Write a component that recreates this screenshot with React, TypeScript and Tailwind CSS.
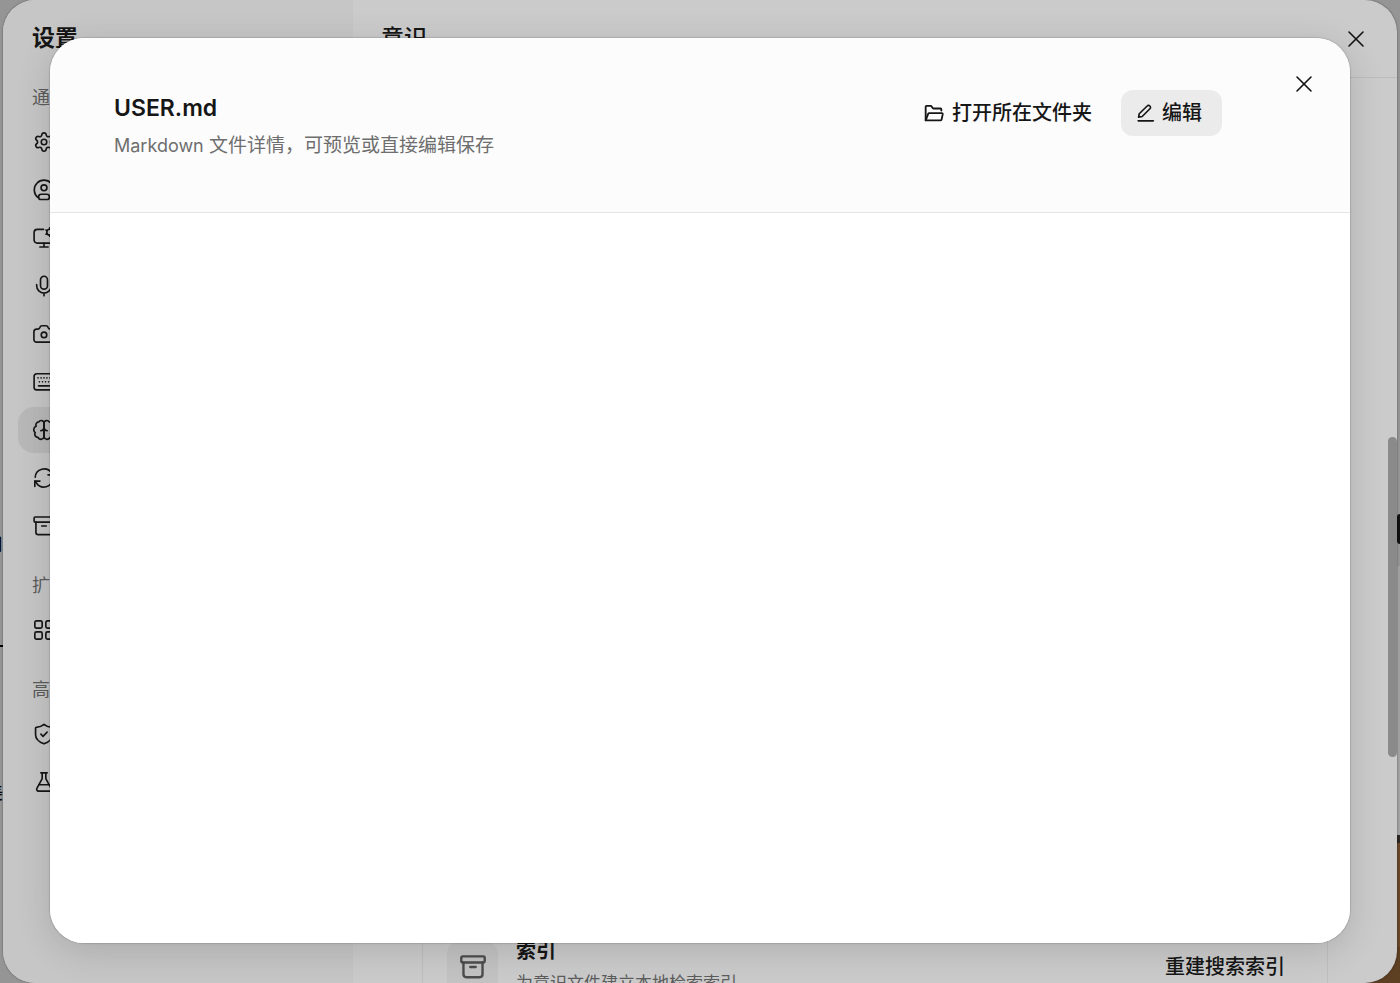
import React from "react";
import { FlaskConical, Settings, X } from "lucide-react";

interface IconProps {
  className?: string;
  children?: React.ReactNode;
}

const Icon = ({
  className = "size-[22px] stroke-[1.8]",
  children,
}: IconProps) => (
  <svg
    viewBox="0 0 24 24"
    fill="none"
    stroke="currentColor"
    strokeLinecap="round"
    strokeLinejoin="round"
    className={`shrink-0 ${className}`}
    aria-hidden="true"
  >
    {children}
  </svg>
);

const UserIcon = () => (
  <Icon>
    <path d="M5.2 20A10.6 10.6 0 1 1 18.8 20" />
    <circle cx="12" cy="9.6" r="3.2" />
    <rect x="6.2" y="16.6" width="11.6" height="5.8" rx="2.6" />
  </Icon>
);

const MonitorIcon = () => (
  <Icon>
    <path d="M11.5 2.6H4.6A3.4 3.4 0 0 0 1.2 6v8.2a3.4 3.4 0 0 0 3.4 3.4h14.8a3.4 3.4 0 0 0 3.4-3.4V11" />
    <path d="M12 17.6v4.2M7.5 21.8h9" />
    <circle cx="18.2" cy="5.6" r="3.2" />
    <path d="M18.2 1v1.4M18.2 8.8v1.4M14.2 3.3l1.2.7M21 7.2l1.2.7M14.2 7.9l1.2-.7M21 4l1.2-.7" />
  </Icon>
);

const MicIcon = () => (
  <Icon>
    <rect x="8.2" y="1.4" width="7.6" height="14" rx="3.8" />
    <path d="M4 10.5v1.2a8 8 0 0 0 16 0v-1.2M12 19.7v3" />
  </Icon>
);

const CameraIcon = () => (
  <Icon>
    <path d="M4 6.6h1.2c1.2 0 1.7-.5 2.2-1.6.5-1.3 1-2 2.4-2h4.4c1.4 0 1.9.7 2.4 2 .5 1.1 1 1.6 2.2 1.6H20a3 3 0 0 1 3 3V18a2.8 2.8 0 0 1-2.8 2.8H3.8A2.8 2.8 0 0 1 1 18V9.6a3 3 0 0 1 3-3Z" />
    <circle cx="12" cy="13" r="3" />
  </Icon>
);

const KeyboardIcon = () => (
  <Icon>
    <rect x="1.2" y="3" width="21.6" height="17.6" rx="3" />
    <path d="M6 16.2h12" />
    <path d="M5.5 7.5h.01M8.8 7.5h.01M12 7.5h.01M15.2 7.5h.01M18.5 7.5h.01M7 11.8h.01M10.4 11.8h.01M13.7 11.8h.01M17 11.8h.01" />
  </Icon>
);

const BrainIcon = () => (
  <Icon>
    <path d="M12 4.4a3 3 0 0 0-5.6-1.2 3.4 3.4 0 0 0-3 4.7 4 4 0 0 0-1 6.9 3.6 3.6 0 0 0 3 5.3A3.5 3.5 0 0 0 12 19.6Z" />
    <path d="M12 4.4a3 3 0 0 1 5.6-1.2 3.4 3.4 0 0 1 3 4.7 4 4 0 0 1 1 6.9 3.6 3.6 0 0 1-3 5.3A3.5 3.5 0 0 1 12 19.6Z" />
    <path d="M8.5 12.8c1.9-.2 3.100-1.200 3.500-3 .4 1.800 1.600 2.800 3.500 3" />
  </Icon>
);

const SyncIcon = () => (
  <Icon>
    <path d="M2.4 11.2a9.7 9.7 0 0 1 17.8-4.7L22 8.6" />
    <path d="M22 2.8v5.8h-5.6" />
    <path d="M21.6 12.8a9.7 9.7 0 0 1-17.8 4.7L2 15.4" />
    <path d="M2 21.2v-5.8h5.6" />
  </Icon>
);

const ArchiveIcon = ({ className }: IconProps) => (
  <Icon className={className}>
    <rect x="1.2" y="2.2" width="21.6" height="5.6" rx="1.2" />
    <path d="M3.2 7.8v11a2.6 2.6 0 0 0 2.6 2.6h12.4a2.6 2.6 0 0 0 2.6-2.6v-11M9.5 12h5" />
  </Icon>
);

const GridIcon = () => (
  <Icon>
    <rect x="2" y="2" width="8" height="8" rx="1.8" />
    <rect x="14" y="2" width="8" height="8" rx="1.8" />
    <rect x="2" y="14" width="8" height="8" rx="1.8" />
    <rect x="14" y="14" width="8" height="8" rx="1.8" />
  </Icon>
);

const ShieldIcon = () => (
  <Icon>
    <path d="M12 1.5c-2.2 1.9-5 3-8.500 3.200-.4 0-.7.4-.7.8v7.300c0 4.500 3.800 7.900 9.200 9.900 5.400-2 9.200-5.400 9.200-9.900V5.500c0-.4-.3-.8-.7-.8C17 4.500 14.200 3.400 12 1.500Z" />
    <path d="m8.6 12.2 2.3 2.3 4.5-4.5" />
  </Icon>
);

const FolderIcon = () => (
  <Icon className="size-5 stroke-[2.2]">
    <path d="M2 20.800V4.400c0-.6.400-1 1-1h5.400l2.600 3.200h8.800c.6 0 1 .4 1 1v1.400" />
    <path d="M2 20.800 5 13c.2-.5.600-.8 1.200-.8h15.300c.7 0 1.100.6 1 1.200l-1.400 6.600c-.1.500-.5.800-1 .8Z" />
  </Icon>
);

const EditIcon = () => (
  <Icon className="size-5 stroke-[2]">
    <path d="M13.4 3.6a2.3 2.3 0 0 1 3.3 0 2.3 2.3 0 0 1 0 3.3L7.400 16.200l-4.300.8.8-4.100Z" />
    <path d="M2.600 21.400h18.200" />
  </Icon>
);

const groups = [
  {
    title: "通",
    items: [
      { id: "general", icon: <Settings size={22} strokeWidth={1.8} /> },
      { id: "account", icon: <UserIcon /> },
      { id: "display", icon: <MonitorIcon /> },
      { id: "voice", icon: <MicIcon /> },
      { id: "camera", icon: <CameraIcon /> },
      { id: "keyboard", icon: <KeyboardIcon /> },
      { id: "mind", icon: <BrainIcon /> },
      { id: "sync", icon: <SyncIcon /> },
      { id: "archive", icon: <ArchiveIcon /> },
    ],
  },
  { title: "扩", items: [{ id: "extensions", icon: <GridIcon /> }] },
  {
    title: "高",
    items: [
      { id: "security", icon: <ShieldIcon /> },
      { id: "labs", icon: <FlaskConical size={22} strokeWidth={1.8} /> },
    ],
  },
];

const Sidebar = () => (
  <aside className="w-[350px] shrink-0 bg-[#c6c6c6] px-[15px]">
    <h1 className="flex h-[77px] items-center pl-[14px] text-[23px] font-bold">
      设置
    </h1>
    <nav className="flex flex-col gap-4">
      {groups.map((group) => (
        <div key={group.title}>
          <h2 className="flex h-[42px] items-center pl-[14px] text-lg text-[#5c5c5c]">
            {group.title}
          </h2>
          <ul className="flex flex-col gap-[2px]">
            {group.items.map((item) => (
              <li key={item.id}>
                <button
                  type="button"
                  aria-label={item.id}
                  className={`flex h-[46px] w-full items-center rounded-2xl px-[15px] ${
                    item.id === "mind" ? "bg-[#b8b8b8]" : ""
                  }`}
                >
                  {item.icon}
                </button>
              </li>
            ))}
          </ul>
        </div>
      ))}
    </nav>
  </aside>
);

const IndexCard = () => (
  <div className="-mb-[30px] flex items-center gap-[18px] border-x border-[#bebebe] py-4 pr-[42px] pl-6">
    <div className="flex size-[51px] items-center justify-center rounded-xl bg-[#c3c3c3] text-[#4c4c4c]">
      <ArchiveIcon className="size-[26px] stroke-[2.2]" />
    </div>
    <div className="flex-1">
      <h3 className="text-xl/7 font-bold">索引</h3>
      <p className="mt-1 text-[17px]/7 text-[#5c5c5c]">
        为意识文件建立本地检索索引
      </p>
    </div>
    <button type="button" className="text-xl font-medium">
      重建搜索索引
    </button>
  </div>
);

const SettingsPanel = () => (
  <div className="relative flex h-full overflow-hidden rounded-[32px] bg-[#cbcbcb] shadow-[0_0_2px_rgba(0,0,0,0.5)]">
    <Sidebar />
    <main className="flex min-w-0 flex-1 flex-col">
      <header className="flex h-[78px] shrink-0 items-center justify-between border-b border-[#bcbcbc] pr-[27px] pl-7">
        <h2 className="text-[23px] font-medium">意识</h2>
        <button type="button" aria-label="关闭设置">
          <X size={28} strokeWidth={1.4} />
        </button>
      </header>
      <section className="flex flex-1 flex-col justify-end overflow-hidden px-[69px]">
        <IndexCard />
      </section>
    </main>
    <div className="absolute top-[437px] right-0 h-[320px] w-[9px] rounded-full bg-[#8a8a8a]" />
  </div>
);

// Slivers of the window that stay visible on both sides of the panel
const Backdrop = () => (
  <div className="absolute inset-0 flex justify-between overflow-hidden">
    <div className="flex w-[3px] flex-col items-end pt-[533px] text-lg/6 text-black">
      <span>用</span>
      <span className="mt-[88px] h-[2px] w-full bg-black" />
      <span className="mt-[134px]">美</span>
    </div>
    <div className="flex w-[3px] flex-col pt-[514px]">
      <div className="h-[30px] rounded-l-lg bg-[#111]" />
      <div className="mt-[22px] h-[269px] bg-[#a2a2a2]" />
      <div className="h-2 bg-[#2b2620]" />
      <div className="flex-1 bg-[#68462a]" />
    </div>
    <div className="absolute right-0 bottom-0 size-9 bg-[#5d3f22]" />
  </div>
);

const FileDialog = () => (
  <div className="absolute inset-0 px-[50px] pt-[38px] pb-10">
    <div
      role="dialog"
      aria-labelledby="file-title"
      className="flex h-full flex-col overflow-hidden rounded-[34px] bg-white shadow-[0_0_1px_1px_rgba(0,0,0,0.12),0_8px_36px_rgba(0,0,0,0.14)]"
    >
      <header className="flex h-[175px] shrink-0 items-start border-b border-[#e4e4e4] bg-[#fcfcfc] pr-8 pl-16">
        <div className="flex-1 pt-[54px]">
          <h2 id="file-title" className="text-[23px]/8 font-semibold">
            USER.md
          </h2>
          <p className="mt-2 text-[19px]/7 text-[#6e6e6e]">
            <span className="text-lg/7">Markdown</span>{" "}
            文件详情，可预览或直接编辑保存
          </p>
        </div>
        <div className="flex gap-[13px] pt-[52px] text-xl font-medium">
          <button
            type="button"
            className="flex h-[46px] items-center gap-2 rounded-xl px-4"
          >
            <FolderIcon />
            打开所在文件夹
          </button>
          <button
            type="button"
            className="flex h-[46px] items-center gap-[6px] rounded-xl bg-[#ebebeb] pr-5 pl-[15px]"
          >
            <EditIcon />
            编辑
          </button>
        </div>
        <button type="button" aria-label="关闭" className="mt-8 ml-[68px]">
          <X size={28} strokeWidth={1.4} />
        </button>
      </header>
      <div className="flex-1 bg-white" />
    </div>
  </div>
);

const App = () => {
  return (
    <div className="relative h-screen overflow-hidden bg-[#959595] px-[3px] font-[Inter,'Noto_Sans_CJK_SC',sans-serif] text-[#161616]">
      <Backdrop />
      <SettingsPanel />
      <FileDialog />
    </div>
  );
};

export default App;
